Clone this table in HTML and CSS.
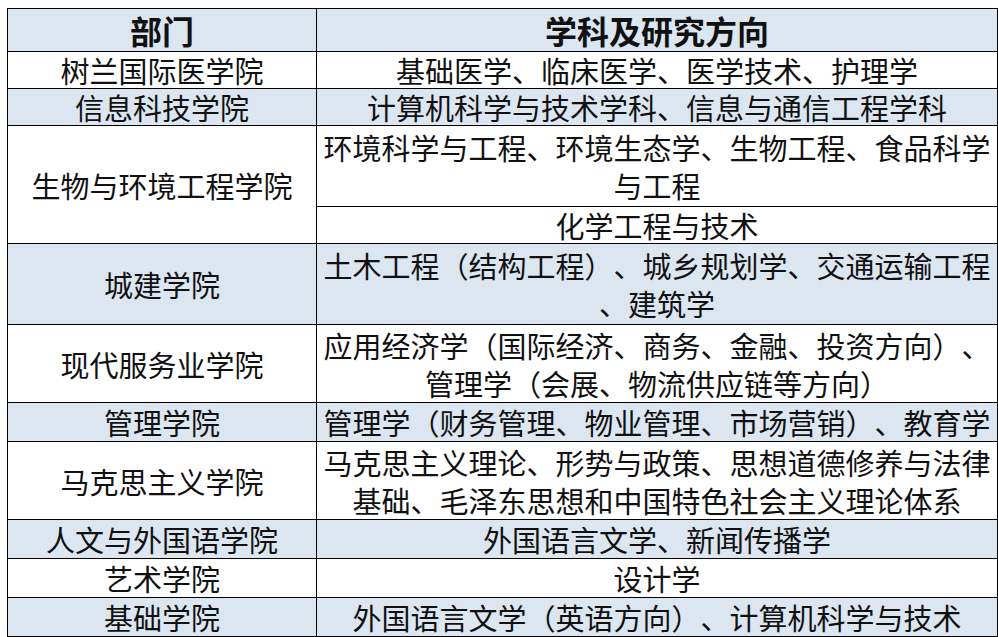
FILE: index.html
```html
<!DOCTYPE html>
<html lang="zh-CN">
<head>
<meta charset="utf-8">
<title>部门与学科</title>
<link rel="stylesheet" href="styles.css">
</head>
<body>
<table class="grid">
  <colgroup><col class="c1"><col class="c2"></colgroup>
  <thead>
    <tr class="h43 shade"><th>部门</th><th>学科及研究方向</th></tr>
  </thead>
  <tbody>
    <tr class="h37"><td>树兰国际医学院</td><td>基础医学、临床医学、医学技术、护理学</td></tr>
    <tr class="h37 shade"><td>信息科技学院</td><td>计算机科学与技术学科、信息与通信工程学科</td></tr>
    <tr class="h81"><td rowspan="2">生物与环境工程学院</td><td class="two">环境科学与工程、环境生态学、生物工程、食品科学<br>与工程</td></tr>
    <tr class="h37"><td>化学工程与技术</td></tr>
    <tr class="h81 shade"><td>城建学院</td><td class="two">土木工程（结构工程）、城乡规划学、交通运输工程<br>、建筑学</td></tr>
    <tr class="h78"><td>现代服务业学院</td><td class="two">应用经济学（国际经济、商务、金融、投资方向）、<br>管理学（会展、物流供应链等方向）</td></tr>
    <tr class="h39 shade"><td>管理学院</td><td>管理学（财务管理、物业管理、市场营销）、教育学</td></tr>
    <tr class="h78"><td>马克思主义学院</td><td class="two">马克思主义理论、形势与政策、思想道德修养与法律<br>基础、毛泽东思想和中国特色社会主义理论体系</td></tr>
    <tr class="h39 shade"><td>人文与外国语学院</td><td>外国语言文学、新闻传播学</td></tr>
    <tr class="h39"><td>艺术学院</td><td>设计学</td></tr>
    <tr class="h39 shade"><td>基础学院</td><td>外国语言文学（英语方向）、计算机科学与技术</td></tr>
  </tbody>
</table>
</body>
</html>
```

FILE: styles.css
```css
html, body {
  margin: 0;
  padding: 0;
  background: #ffffff;
}

body {
  padding: 8px 0 0 7px;
  font-family: "Noto Sans CJK SC", "Noto Sans", sans-serif;
  color: #111111;
}

.grid {
  border-collapse: collapse;
  table-layout: fixed;
  width: 990px;
}

.c1 { width: 309px; }
.c2 { width: 681px; }

.grid th,
.grid td {
  border: 1px solid #000000;
  padding: 0 2px;
  text-align: center;
  vertical-align: middle;
  white-space: nowrap;
  font-size: 29px;
  line-height: 32px;
  font-weight: 400;
  text-spacing-trim: space-all;
}

.grid td.two {
  line-height: 38px;
}

.grid th {
  font-size: 32px;
  font-weight: 700;
}

.shade th,
.shade td {
  background: #dce6f1;
}

.shade td[rowspan] { background: #ffffff; }

.h43 { height: 43px; }
.h37 { height: 37px; }
.h39 { height: 39px; }
.h78 { height: 78px; }
.h81 { height: 81px; }
```
